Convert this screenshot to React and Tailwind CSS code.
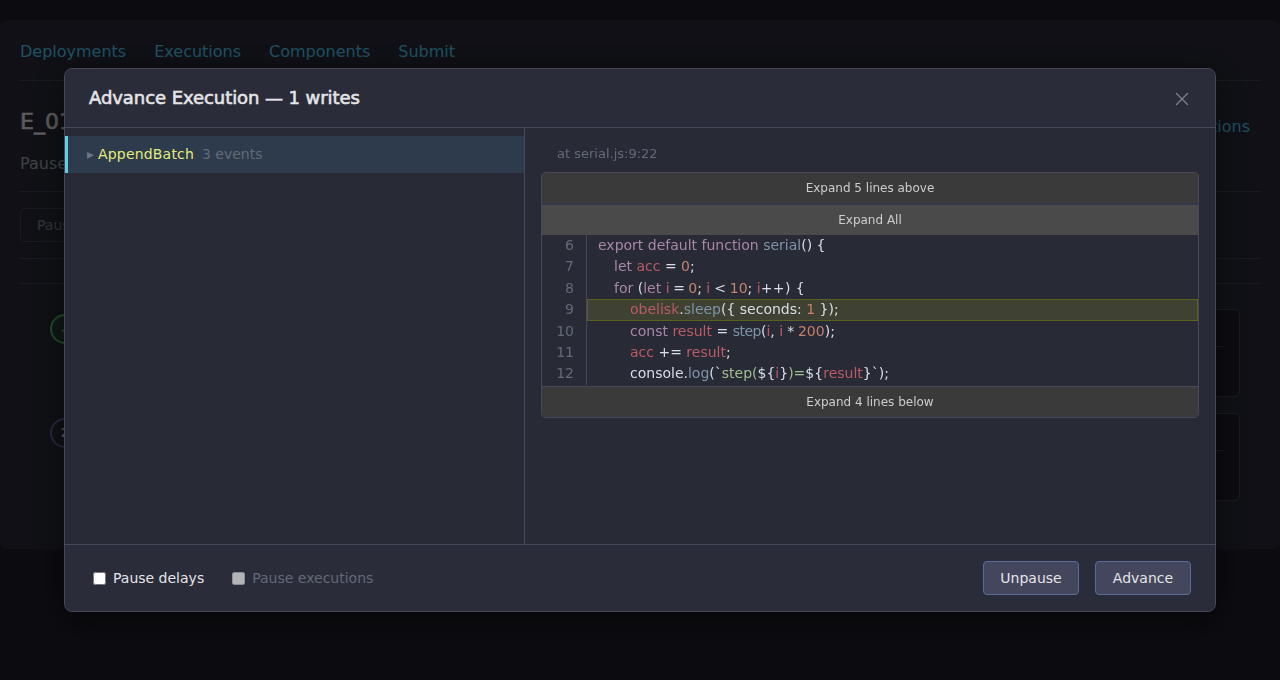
import { X } from 'lucide-react';

const kw = 'text-[#a987a8]';
const fn = 'text-[#7f93a8]';
const vr = 'text-[#b85c66]';
const num = 'text-[#c5826c]';
const str = 'text-[#a3be8c]';

const lines = [
    { n: 6, indent: 0, parts: [['export default function ', kw], ['serial', fn], ['() {']] },
    { n: 7, indent: 1, parts: [['let ', kw], ['acc', vr], [' = '], ['0', num], [';']] },
    { n: 8, indent: 1, parts: [['for', kw], [' ('], ['let ', kw], ['i', vr], [' = ', 'tracking-[-0.65px]'], ['0', num], ['; '], ['i', vr], [' < ', 'tracking-[-0.35px]'], ['10', num], ['; '], ['i', vr], ['++) {', 'tracking-[0.4px]']] },
    { n: 9, indent: 2, active: true, parts: [['obelisk', vr], ['.'], ['sleep', fn], ['({ seconds: '], ['1', num], [' });']] },
    { n: 10, indent: 2, parts: [['const ', kw], ['result', vr], [' = '], ['step', `${fn} tracking-[-0.5px]`], ['('], ['i', vr], [', '], ['i', vr], [' * ', 'tracking-[-0.35px]'], ['200', num], [');']] },
    { n: 11, indent: 2, parts: [['acc', vr], [' += '], ['result', vr], [';']] },
    { n: 12, indent: 2, parts: [['console.'], ['log', fn], ['(`'], ['step(', str], ['${'], ['i', vr], ['}'], [')=', str], ['${'], ['result', vr], ['}`);']] },
];

const ExpandBar = ({ children, light }) => (
    <div className={`h-[30px] flex items-center justify-center text-xs text-[#cccccc] ${light ? 'bg-[#4a4a4a]' : 'bg-[#3a3a3a]'}`}>
        {children}
    </div>
);

const Background = () => (
    <div className="h-[529px] mt-5 mx-0 px-5 rounded-lg bg-[#282a37]">
        <nav className="h-[61px] pt-1 flex items-center gap-7 border-b border-[#414355] text-[#4dc8f0] text-base">
            <span>Deployments</span>
            <span>Executions</span>
            <span>Components</span>
            <span>Submit</span>
        </nav>
        <div className="h-[111px] border-b border-[#414355] pt-[26px] pr-2.5 flex justify-between">
            <div>
                <div className="text-[22px] leading-[30px] [-webkit-text-stroke:0.6px] text-[#e0e0e0]">E_01</div>
                <div className="mt-[15px] text-base text-[#a0a4ad]">Paused</div>
            </div>
            <div className="text-[#4dc8f0] mt-[8px]">Deployment executions</div>
        </div>
        <div className="h-[67px] border-b border-[#414355] flex items-center">
            <div className="h-[34px] px-4 flex items-center rounded border border-[#414355] text-sm text-[#7f8290]">Pause</div>
        </div>
        <div className="h-[25px] border-b border-[#414355]"></div>
        <div className="pt-[25px] pl-[30px] pr-5 flex flex-col gap-4">
            {[0, 1].map((i) => (
                <div key={i} className="h-[88px] flex gap-5">
                    <div className={`w-[30px] h-[30px] mt-[5px] rounded-full border-2 flex items-center justify-center text-xs font-bold ${i === 0 ? 'border-[#4fc36f] bg-[#4fc36f]/10 text-[#4fc36f]' : 'border-[#5a6a9c] text-[#cdd6f4]'}`}>
                        {i === 0 ? '✓' : '2'}
                    </div>
                    <div className="flex-1 rounded-md border border-[#414355] bg-[#1e1f2b] pt-9 px-4">
                        <div className="border-b border-[#414355]"></div>
                    </div>
                </div>
            ))}
        </div>
    </div>
);

export default function App() {
    return (
        <div className="relative w-[1280px] h-[680px] overflow-hidden bg-[#1e1e2a] font-['DejaVu_Sans',sans-serif]">
            <Background />
            <div className="fixed inset-0 bg-black/60 flex items-center justify-center">
                <div className="w-[1152px] h-[544px] flex flex-col rounded-lg border border-[#45475a] bg-[#282a36] shadow-[0_8px_32px_rgba(0,0,0,0.5)] overflow-hidden">
                    <header className="h-[59px] shrink-0 flex items-center justify-between pl-6 pr-[22px] bg-[#2a2c39] border-b border-[#45475a]">
                        <h2 className="text-lg tracking-[-0.07px] [-webkit-text-stroke:0.6px] text-[#e4e4e7]">Advance Execution — 1 writes</h2>
                        <X size={22} strokeWidth={1.5} className="mt-[2px] text-[#7d7f8c]" />
                    </header>
                    <div className="flex-1 flex min-h-0">
                        <aside className="w-[460px] shrink-0 border-r border-[#45475a] pt-2">
                            <div className="h-[37px] pb-px flex items-center bg-[#2e3b4d] border-l-[3px] border-[#5ccfe6] pl-[19px] text-sm">
                                <span className="text-[14px] text-[#6c7686] mr-[4px]">▸</span>
                                <span className="text-[#e3ec7c] tracking-[0.18px]">AppendBatch</span>
                                <span className="ml-2 text-[#626a78]">3 events</span>
                            </div>
                        </aside>
                        <section className="flex-1 pl-4 pr-4">
                            <div className="h-[44px] pl-4 pt-[17px] text-[13px] leading-[17px] text-[#626a78]">at serial.js:9:22</div>
                            <div className="rounded border border-[#45475a] overflow-hidden">
                                <ExpandBar>Expand 5 lines above</ExpandBar>
                                <div className="h-[2px] bg-[#35374a]"></div>
                                <ExpandBar light>Expand All</ExpandBar>
                                <div className="text-sm leading-[21.4px] pb-[1px] text-[#d8dee9] bg-[#282a36]">
                                    {lines.map((l) => (
                                        <div key={l.n} className="flex">
                                            <div className="w-[45px] shrink-0 pr-3 text-right text-[#626a78] border-r border-[#45475a]">{l.n}</div>
                                            <div className={`flex-1 pl-[11px] whitespace-pre ${l.active ? 'bg-[#3f4132] outline outline-1 -outline-offset-1 outline-[#5a6020]' : ''}`}>
                                                <span className={l.indent === 1 ? 'pl-4' : l.indent === 2 ? 'pl-8' : ''}>
                                                    {l.parts.map(([t, c], i) => <span key={i} className={c}>{t}</span>)}
                                                </span>
                                            </div>
                                        </div>
                                    ))}
                                </div>
                                <div className="border-t border-[#45475a]">
                                    <ExpandBar>Expand 4 lines below</ExpandBar>
                                </div>
                            </div>
                        </section>
                    </div>
                    <footer className="h-[67px] shrink-0 flex items-center justify-between pl-7 pr-6 bg-[#2a2c39] border-t border-[#45475a] text-sm">
                        <div className="flex items-center gap-7">
                            <label className="flex items-center gap-[7px] text-[#e4e4e7]">
                                <input type="checkbox" className="w-[13px] h-[13px]" />
                                Pause delays
                            </label>
                            <label className="flex items-center gap-[7px] text-[#626a78]">
                                <input type="checkbox" disabled className="w-[13px] h-[13px]" />
                                Pause executions
                            </label>
                        </div>
                        <div className="flex gap-4">
                            <button className="w-24 h-[34px] rounded bg-[#43465c] border border-[#5b6b9c] text-[#e4e4e7]">Unpause</button>
                            <button className="w-24 h-[34px] rounded bg-[#43465c] border border-[#5b6b9c] text-[#e4e4e7]">Advance</button>
                        </div>
                    </footer>
                </div>
            </div>
        </div>
    );
}
